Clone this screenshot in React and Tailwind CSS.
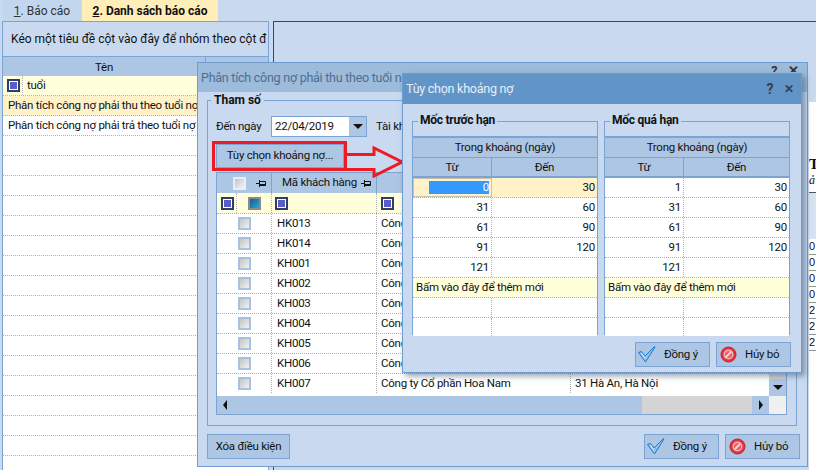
import React from 'react'

const FilterBox = () => (
  <span className="flex h-[13px] w-[13px] shrink-0 items-center justify-center border-2 border-[#2c3f6b] bg-white">
    <span className="h-[7px] w-[7px] bg-[#5d5cc6]" />
  </span>
)

const CheckBox = ({ head }) => (
  <span className={`flex h-[13px] w-[13px] shrink-0 items-center justify-center border-2 ${head ? 'border-[#e8eef6]' : 'border-[#a9c1e0]'} bg-white`}>
    <span className="h-[9px] w-[9px] bg-gradient-to-br from-[#c4c4c4] to-[#f2f2f2]" />
  </span>
)

const Pin = () => (
  <svg width="10" height="9" viewBox="0 0 10 9" className="shrink-0">
    <path d="M0 4.500h3M3.500 1v7M3.500 2.500h6v4h-6M4 5.500h5" stroke="#111" strokeWidth="1" fill="none" />
  </svg>
)

const Tick = () => (
  <svg width="18" height="17" viewBox="0 0 18 17" className="shrink-0">
    <path d="M0.500 6.500L3.500 5.500L7 10L16.500 0.500L17 1L7.500 16z" fill="#8cc4f0" stroke="#1f78cc" strokeWidth="1" strokeLinejoin="round" />
    <path d="M3.500 7L7 12.500" stroke="#d8ecfb" strokeWidth="1" fill="none" />
  </svg>
)

const Cancel = () => (
  <svg width="17" height="17" viewBox="0 0 17 17" className="shrink-0">
    <circle cx="8.500" cy="8.500" r="7.500" fill="#e5333f" stroke="#c81e2c" />
    <circle cx="8.500" cy="8.500" r="4.300" fill="#ee5a62" stroke="#f7b3b7" strokeWidth="1.400" />
    <path d="M5.500 11.500l6-6" stroke="#fbd2d4" strokeWidth="2" />
  </svg>
)

const Btn = ({ icon, children, className }) => (
  <button className={`flex h-[25px] items-center border border-[#7ba3d3] bg-[#adc6e4] text-[#111] ${className}`}>
    {icon}
    {children}
  </button>
)

const OkCancel = () => (
  <div className="flex gap-[6px]">
    <Btn className="w-[75px] pl-[2px] gap-[8px]" icon={<Tick />}>Đồng ý</Btn>
    <Btn className="w-[75px] pl-[3px] gap-[8px]" icon={<Cancel />}>Hủy bỏ</Btn>
  </div>
)

const Arrow = ({ dir }) => (
  <span className={dir === 'down' ? 'h-0 w-0 border-x-[5px] border-t-[5px] border-x-transparent border-t-[#111]' : dir === 'left' ? 'h-0 w-0 border-y-[5px] border-r-[4px] border-y-transparent border-r-[#111]' : 'h-0 w-0 border-y-[5px] border-l-[4px] border-y-transparent border-l-[#111]'} />
)

const dot = 'border-dotted border-[#b0b0b0]'

const leftRows = 18

const LeftPanel = () => (
  <div className="ml-[2px] flex h-[449px] w-[267px] flex-col border-l border-r border-[#7ba3d3]">
    <div className="flex h-[36px] shrink-0 items-center border-t border-b border-[#7ba3d3] pl-[8px] text-[12px] tracking-[0px] overflow-hidden whitespace-nowrap">
      Kéo một tiêu đề cột vào đây để nhóm theo cột đ
    </div>
    <div className="grid h-[19px] shrink-0 grid-cols-[203px_1fr] bg-[#adc6e4] text-center">
      <div className="border-r border-[#7ba3d3] leading-[20px]">Tên</div>
      <div />
    </div>
    <div className="flex-1 overflow-hidden bg-white">
      <div className={`flex h-[20px] items-center bg-[#ffffdc] pl-[4px] border-b ${dot}`}>
        <FilterBox />
        <span className={`ml-[2px] flex h-full items-center border-l pl-[4px] ${dot}`}>tuổi</span>
      </div>
      <div className={`flex h-[20px] items-center bg-[#fff1c8] pl-[5px] whitespace-nowrap border-b ${dot}`}>
        <span className="w-[189px] overflow-hidden">Phân tích công nợ phải thu theo tuổi nợ</span>
      </div>
      <div className={`flex h-[20px] items-center pl-[5px] whitespace-nowrap border-b ${dot}`}>
        <span className="w-[189px] overflow-hidden">Phân tích công nợ phải trả theo tuổi nợ</span>
      </div>
      {Array.from({ length: leftRows }).map((_, i) => (
        <div key={i} className={`h-[20px] border-b ${dot}`} />
      ))}
    </div>
  </div>
)

const ReportEdge = () => (
  <div className="absolute left-[809px] top-[102px] h-[368px] w-[7px] overflow-hidden bg-white font-['Liberation_Serif'] text-[#111]">
    <div className="mt-[54px] text-[15px] leading-[16px] font-bold">T</div>
    <div className="text-[12px] leading-[16px] italic">ả</div>
    <div className="mt-[4px] h-[47px] border-t border-[#555] bg-[#d5e3f3]" />
    <div className="font-['Liberation_Sans'] text-[11px] leading-[15px]">
      {['0', '0', '0', '0', '2', '2', '2'].map((n, i) => (
        <div key={i} className="border-b border-[#999]">{n}</div>
      ))}
    </div>
  </div>
)

const customers = ['HK013', 'HK014', 'KH001', 'KH002', 'KH003', 'KH004', 'KH005', 'KH006', 'KH007']
const colClass = 'grid grid-cols-[55px_105px_194px_199px]'

const CustomerGrid = () => (
  <div className="ml-[8px] mt-[4px] flex w-[571px] flex-col border border-[#7ba3d3] bg-white">
    <div className="flex h-[223px]">
      <div className="w-[553px] overflow-hidden">
        <div className={`${colClass} h-[20px] bg-[#adc6e4]`}>
          <div className="flex items-center justify-between border-r border-[#7ba3d3] pl-[16px] pr-[5px]">
            <CheckBox head />
            <Pin />
          </div>
          <div className="flex items-center justify-between whitespace-nowrap border-r border-[#7ba3d3] pl-[10px] pr-[5px]">
            Mã khách hàng
            <Pin />
          </div>
          <div className="border-r border-[#7ba3d3]" />
          <div />
        </div>
        <div className={`${colClass} h-[20px] bg-[#ffffdc]`}>
          <div className={`flex items-center gap-[2px] border-r pl-[4px] ${dot}`}>
            <FilterBox />
            <span className={`flex h-full items-center border-l pl-[11px] ${dot}`}>
              <span className="flex h-[13px] w-[13px] items-center justify-center border-2 border-[#8a8a8a]">
                <span className="h-[9px] w-[9px] bg-gradient-to-br from-[#1a5f8c] to-[#2ea3d6]" />
              </span>
            </span>
          </div>
          <div className={`flex items-center border-r pl-[3px] ${dot}`}><FilterBox /></div>
          <div className={`flex items-center border-r pl-[4px] ${dot}`}><FilterBox /></div>
          <div className="flex items-center pl-[4px]"><FilterBox /></div>
        </div>
        {customers.map((code) => {
          const last = code === 'KH007'
          return (
            <div key={code} className={`${colClass} h-[20px] border-t ${dot}`}>
              <div className={`flex items-center border-r pl-[21px] ${dot}`}><CheckBox /></div>
              <div className={`flex items-center border-r pl-[5px] ${dot}`}>{code}</div>
              <div className={`flex items-center border-r pl-[4px] whitespace-nowrap ${dot}`}>
                {last ? 'Công ty Cổ phần Hoa Nam' : <span className="w-[21px] overflow-hidden">Công ty</span>}
              </div>
              <div className="flex items-center pl-[4px]">{last && '31 Hà An, Hà Nội'}</div>
            </div>
          )
        })}
      </div>
      <div className="flex w-[17px] flex-col bg-[#d4d4d4]">
        <div className="flex-1" />
        <div className="flex h-[17px] items-center justify-center bg-[#adc6e4]"><Arrow dir="down" /></div>
      </div>
    </div>
    <div className="flex h-[18px]">
      <div className="flex w-[426px] items-center bg-[#adc6e4] pl-[6px]"><Arrow dir="left" /></div>
      <div className="w-[110px] bg-[#d4d4d4]" />
      <div className="flex w-[17px] items-center justify-center bg-[#adc6e4]"><Arrow dir="right" /></div>
      <div className="w-[17px] bg-[#f0f0f0]" />
    </div>
  </div>
)

const MainDialog = () => (
  <div className="absolute left-[197px] top-[62px] flex h-[405px] w-[611px] flex-col border border-[#6f9bd0] bg-[#c9daf0]">
    <div className="flex h-[29px] shrink-0 items-start justify-between bg-[#9dbbdb] pl-[3px] pr-[8px] text-[12.500px] text-[#4f6f90]">
      <span className="mt-[6px] w-[201px] overflow-hidden whitespace-nowrap">Phân tích công nợ phải thu theo tuổi nợ</span>
      <span className="mt-[-1px] flex h-[10px] gap-[11px] overflow-hidden font-bold text-[#333]"><span>?</span><span>✕</span></span>
    </div>
    <div className="relative mx-[9px] mt-[8px] h-[326px] w-[590px] shrink-0 border border-[#7ba3d3]">
      <span className="absolute left-[3px] top-[-9px] bg-[#c9daf0] px-[3px] text-[12px] font-bold leading-[16px] tracking-[0px]">Tham số</span>
      <div className="ml-[8px] mt-[15px] flex h-[21px] items-center">
        <span className="w-[55px]">Đến ngày</span>
        <div className="flex h-[21px] w-[96px] items-center border border-[#7ba3d3] bg-white pl-[3px]">
          <span className="flex-1">22/04/2019</span>
          <span className="flex h-full w-[17px] items-center justify-center bg-[#adc6e4]"><Arrow dir="down" /></span>
        </div>
        <span className="ml-[9px] w-[26px] overflow-hidden whitespace-nowrap">Tài khoản</span>
      </div>
      <button className="ml-[8px] mt-[7px] block h-[24px] w-[128px] border border-[#7ba3d3] bg-[#adc6e4] text-[#111]">Tùy chọn khoảng nợ...</button>
      <CustomerGrid />
    </div>
    <div className="mx-[9px] mt-[8px] flex items-center justify-between">
      <Btn className="w-[83px] justify-center">Xóa điều kiện</Btn>
      <div className="-mr-[2px]"><OkCancel /></div>
    </div>
  </div>
)

const ranges = [[0, 30], [31, 60], [61, 90], [91, 120], [121, '']]

const RangeGroup = ({ title, first, cols, active }) => (
  <div className="relative h-[214px] w-[186px] border border-[#7ba3d3]">
    <span className="absolute left-[5px] top-[-10px] bg-[#c9daf0] px-[2px] text-[12px] font-bold leading-[16px]">{title}</span>
    <div className="mt-[14px] border-t-2 border-[#7ba3d3] bg-white">
      <div className="h-[20px] border-b border-[#7ba3d3] bg-[#adc6e4] text-center leading-[19px]">Trong khoảng (ngày)</div>
      <div className={`${cols} grid h-[20px] border-b-2 border-[#7ba3d3] bg-[#adc6e4] text-center leading-[18px]`}>
        <div className="border-r border-[#7ba3d3]">Từ</div>
        <div>Đến</div>
      </div>
      {ranges.map(([a, b], i) => {
        const selected = active && i === 0
        return (
          <div key={i} className={`${cols} grid h-[20px] border-b ${dot} ${selected ? 'bg-[#fff1c8]' : ''}`}>
            <div className={`flex items-center justify-end border-r pr-[2px] ${selected ? 'border border-[#c9c3ad]' : dot}`}>
              {selected
                ? <span className="h-[13px] w-[60px] bg-[#3399ff] text-right leading-[13px] text-white">0</span>
                : (i === 0 ? first : a)}
            </div>
            <div className="flex items-center justify-end pr-[2px]">{b}</div>
          </div>
        )
      })}
      <div className={`h-[20px] border-b bg-[#ffffdc] pl-[3px] leading-[19px] ${dot}`}>Bấm vào đây để thêm mới</div>
      {[0, 1].map((i) => (
        <div key={i} className={`${cols} grid ${i === 0 ? `h-[20px] border-b ${dot}` : 'h-[18px]'}`}>
          <div className={`border-r ${dot}`} />
          <div />
        </div>
      ))}
    </div>
  </div>
)

const RangeDialog = () => (
  <div className="absolute left-[402px] top-[73px] flex h-[300px] w-[400px] flex-col border border-[#6f9bd0] bg-[#c9daf0] shadow-[3px_3px_6px_rgba(60,80,110,0.55)]">
    <div className="flex h-[30px] shrink-0 items-center justify-between bg-[#6295c7] pl-[3px] pr-[7px] text-[12.500px] text-[#e6eef8]">
      <span>Tùy chọn khoảng nợ</span>
      <span className="flex items-center gap-[11px] font-bold text-[#3a3f48]"><span className="text-[14px]">?</span><span className="text-[12px]">✕</span></span>
    </div>
    <div className="ml-[9px] mt-[17px] flex gap-[6px]">
      <RangeGroup title="Mốc trước hạn" first={0} cols="grid-cols-[79px_1fr]" active />
      <RangeGroup title="Mốc quá hạn" first={1} cols="grid-cols-[79px_1fr]" />
    </div>
    <div className="ml-[232px] mt-[7px]"><OkCancel /></div>
  </div>
)

export default function App() {
  return (
    <div className="relative h-[470px] w-[816px] overflow-hidden bg-[#c9daf0] font-['Roboto',sans-serif] text-[11.500px] tracking-[-0.25px] text-[#111]">
      <div className="flex h-[21px] pl-[3px]">
        <div className="flex w-[78px] items-center justify-center bg-[#c2d6ee] text-[12px] tracking-[0px] text-[#333]"><span><u>1</u>. Báo cáo</span></div>
        <div className="ml-[1px] flex w-[136px] items-center justify-center bg-[#ffeeb8] text-[12px] font-bold tracking-[0px]"><span><u>2</u>. Danh sách báo cáo</span></div>
      </div>
      <div className="flex">
        <LeftPanel />
        <div className="ml-[4px] h-[449px] flex-1 border-l border-t border-[#1f4e85]" />
      </div>
      <ReportEdge />
      <MainDialog />
      {/* red callout */}
      <div className="absolute left-[212px] top-[141px] h-[30px] w-[135px] border-[3px] border-[#ed1c24]" />
      <svg className="absolute left-[346px] top-[146px]" width="58" height="32" viewBox="0 0 58 32">
        <path d="M1 8.500h27V2l28 14-28 14v-6.500H1" fill="none" stroke="#ed1c24" strokeWidth="3" />
      </svg>
      <RangeDialog />
    </div>
  )
}
